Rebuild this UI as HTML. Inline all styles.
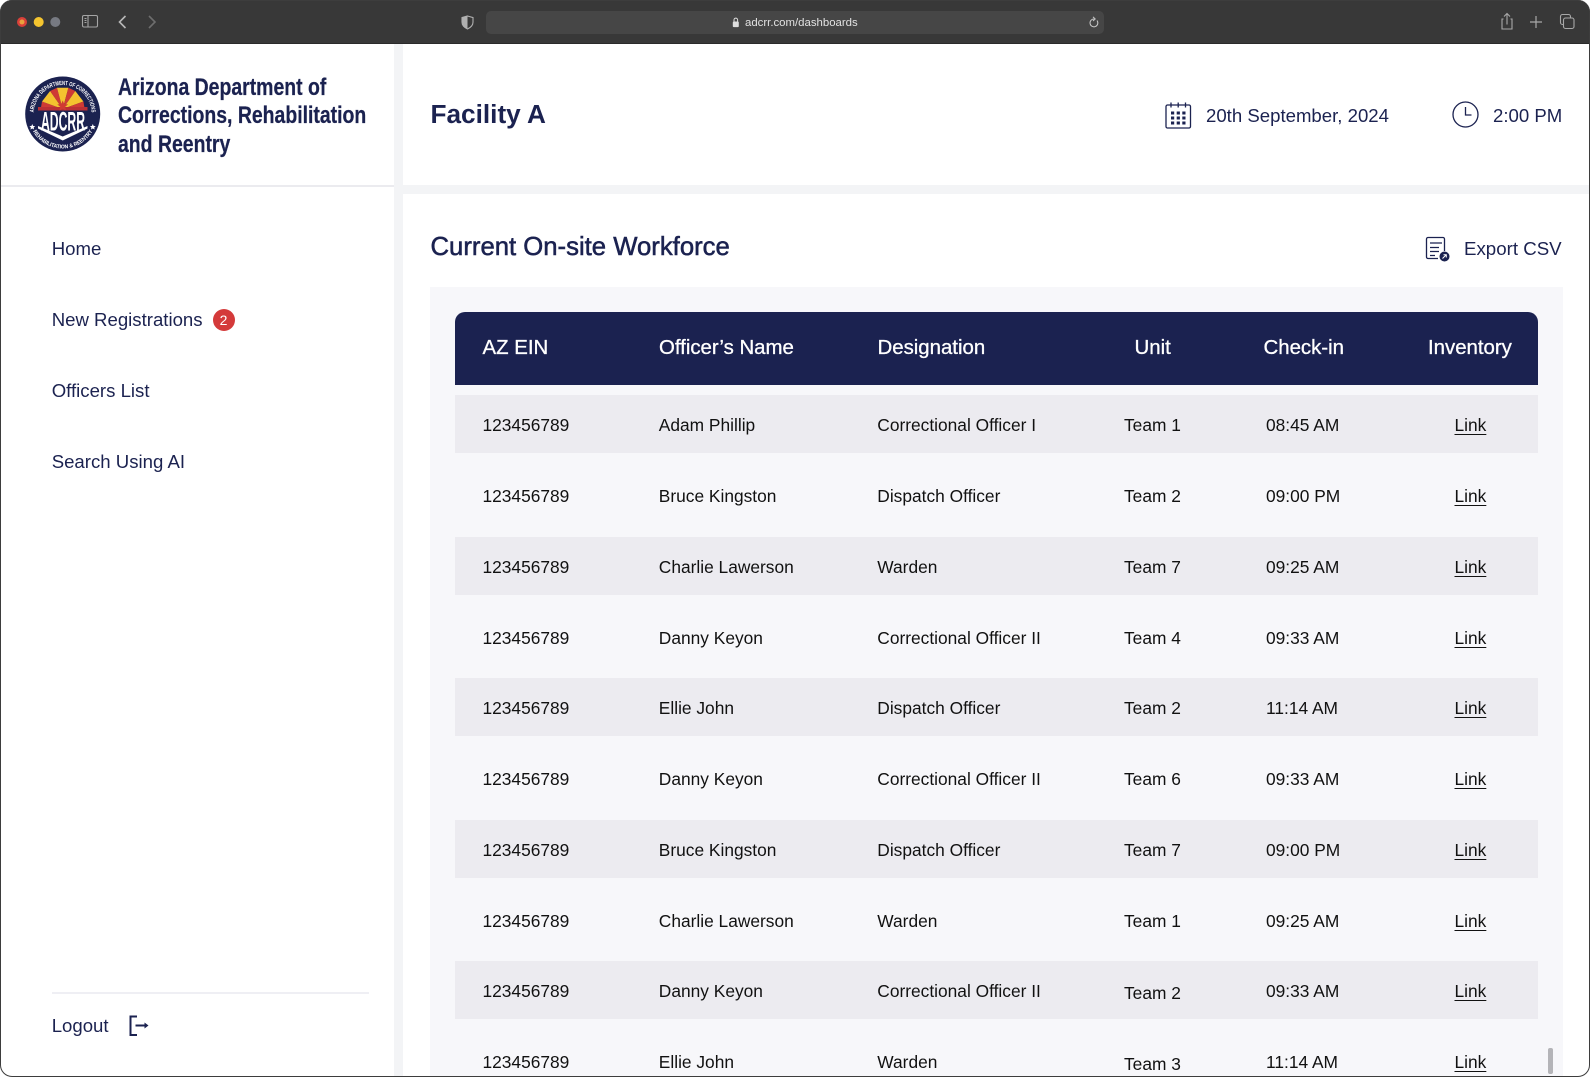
<!DOCTYPE html>
<html><head><meta charset="utf-8"><title>Facility A</title>
<style>
*{box-sizing:border-box;margin:0;padding:0}
html,body{width:1590px;height:1077px;overflow:hidden;background:#fff;font-family:"Liberation Sans",sans-serif}
#win{position:absolute;left:0;top:0;width:1590px;height:1077px;overflow:hidden;background:#f3f4f6;border-radius:12px}
#edge{position:absolute;left:0;top:0;width:1590px;height:1077px;border:1px solid #3d3d3d;border-radius:12px;pointer-events:none;z-index:9}
.a{position:absolute;white-space:nowrap}
.nav{left:51.7px;font-size:18.6px;line-height:24px;color:#1b2250}
.row{position:absolute;left:455px;width:1083px;height:58px}
.row.s{background:#ecebf0}
.row span{position:absolute;top:18px;line-height:24px;font-size:17.35px;color:#111;white-space:nowrap}
.c1{left:27.5px}.c2{left:203.8px}.c3{left:422.3px}.c4{left:669px}.c5{left:811px}
.row .c6{left:999.5px;text-decoration:underline;text-underline-offset:3px}
.th{top:336px;line-height:24px;font-size:20.4px;color:#fff;-webkit-text-stroke:.3px #fff}
</style></head><body>
<div id="win">
<div class="a" style="left:0;top:0;width:1590px;height:44px;background:#383838;border-top:1px solid #6a6a6a;border-bottom:1px solid #2a2a2a"></div>
<svg class="a" style="left:0;top:0" width="1590" height="44" fill="none">
<circle cx="22" cy="22" r="5" fill="#d8403a"/><circle cx="22" cy="22" r="2.5" fill="#e9a23c"/>
<circle cx="38.7" cy="22" r="5" fill="#f5c52f"/><circle cx="55.3" cy="22" r="5" fill="#777a82"/>
<rect x="82.5" y="15.5" width="15" height="11.5" rx="1.5" stroke="#a5a5a5" stroke-width="1.1"/><path d="M88 15.5V27" stroke="#a5a5a5" stroke-width="1.1"/><path d="M84.5 18.5h2M84.5 20.5h2M84.5 22.5h2" stroke="#a5a5a5" stroke-width=".9"/>
<path d="M125.5 16l-6 6 6 6" stroke="#b8b8b8" stroke-width="1.6"/><path d="M149 16l6 6-6 6" stroke="#6e6e6e" stroke-width="1.6"/>
<path d="M467.5 16l5.5 1.6v4.5c0 3.4-2.4 5.4-5.5 6.9-3.1-1.5-5.5-3.5-5.5-6.9v-4.5z" fill="#383838" stroke="#b0b0b0" stroke-width="1.1"/><path d="M467.5 16l-5.5 1.6v4.5c0 3.4 2.4 5.4 5.5 6.9z" fill="#b0b0b0"/>
<rect x="486" y="11" width="618" height="23" rx="5" fill="#464646"/>
<rect x="732.8" y="21.5" width="6" height="5.6" rx="1" fill="#dedede"/><path d="M734 21.5v-1.6a1.8 1.8 0 0 1 3.6 0V21.5" stroke="#dedede" stroke-width="1"/>
<path d="M1097 20.500a3.900 3.900 0 1 1-2.900-1.500" stroke="#c8c8c8" stroke-width="1"/><path d="M1093 16.800l2.200 2.200-2.200 2" stroke="#c8c8c8" stroke-width="1"/>
<path d="M1503.5 19h-1.5v10h10V19h-1.500" stroke="#a8a8a8" stroke-width="1.100"/><path d="M1507 24.500V14M1504 16.500l3-3 3 3" stroke="#a8a8a8" stroke-width="1.100"/>
<path d="M1536 16v12M1530 22h12" stroke="#a8a8a8" stroke-width="1.200"/>
<rect x="1563.500" y="18" width="10.500" height="10.500" rx="2" stroke="#a8a8a8" stroke-width="1.100"/><path d="M1563.500 24.500h-1a2 2 0 0 1-2-2v-6a2 2 0 0 1 2-2h6a2 2 0 0 1 2 2v1.500" stroke="#a8a8a8" stroke-width="1.100"/>
</svg>
<div class="a" style="left:745px;top:16px;font-size:11.4px;line-height:14px;color:#e2e2e2">adcrr.com/dashboards</div>

<div class="a" style="left:0;top:44px;width:394px;height:1033px;background:#fff"></div>
<div class="a" style="left:0;top:185px;width:394px;height:2px;background:#ebebef"></div>
<div class="a" style="left:403px;top:44px;width:1187px;height:141px;background:#fff"></div>
<div class="a" style="left:403px;top:194px;width:1187px;height:883px;background:#fff"></div>

<svg class="a" style="left:25px;top:76px" width="76" height="76" viewBox="0 0 76 76">
<defs><path id="tp1" d="M8.700 38a29 29 0 0 1 58 0"/><path id="tp2" d="M3.200 38a34.500 34.500 0 0 0 69 0"/></defs>
<circle cx="37.700" cy="38" r="37.500" fill="#1b2250"/>
<polygon points="37.700,33 15.700,33 17,25.500" fill="#cf3a35"/>
<polygon points="37.700,33 17,25.500 25.100,15" fill="#f4c22f"/>
<polygon points="37.700,33 25.100,15 32,11.700" fill="#cf3a35"/>
<polygon points="37.700,33 32,11.700 43.400,11.700" fill="#f4c22f"/>
<polygon points="37.700,33 43.400,11.700 50.300,15" fill="#cf3a35"/>
<polygon points="37.700,33 50.300,15 58.400,25.500" fill="#f4c22f"/>
<polygon points="37.700,33 58.400,25.500 59.700,33" fill="#cf3a35"/>
<path d="M13 35H62.500V51L37.700 62 13 51Z" fill="#1b2250"/>
<path d="M13 50L37.700 60.500 62.500 50V52.500L37.700 64.500 13 52.500Z" fill="#fff"/>
<rect x="13" y="31" width="49.500" height="3.500" fill="#b92f35"/>
<path d="M37.700 24.500l1.500 3.600 3.900.300-3 2.500 1 3.800-3.400-2.100-3.400 2.100 1-3.800-3-2.500 3.900-.300z" fill="#d03a32"/>
<text x="38" y="54.500" text-anchor="middle" font-family="Liberation Sans" font-weight="700" font-size="27" fill="#fff" textLength="44" lengthAdjust="spacingAndGlyphs">ADCRR</text>
<text font-family="Liberation Sans" font-weight="700" font-size="6" fill="#fff" textLength="88" lengthAdjust="spacingAndGlyphs"><textPath href="#tp1" startOffset="50%" text-anchor="middle">ARIZONA DEPARTMENT OF CORRECTIONS</textPath></text>
<text font-family="Liberation Sans" font-weight="700" font-size="5.600" fill="#fff" textLength="72" lengthAdjust="spacingAndGlyphs"><textPath href="#tp2" startOffset="50%" text-anchor="middle">REHABILITATION &amp; REENTRY</textPath></text>
<path d="M6.500 49.500l.9 2 2.100.200-1.600 1.400.5 2.100-1.900-1.100-1.900 1.100.5-2.100-1.600-1.400 2.100-.200zM68.900 49.500l.9 2 2.100.200-1.600 1.400.5 2.100-1.900-1.100-1.900 1.100.5-2.100-1.600-1.400 2.100-.200z" fill="#fff" transform="scale(.97) translate(1 0)"/>
</svg>
<div class="a" style="left:118.200px;top:73.500px;font-size:24.500px;line-height:28.500px;font-weight:700;-webkit-text-stroke:.25px #1b2250;color:#1b2250;transform:scaleX(.793);transform-origin:0 0">Arizona Department of<br>Corrections, Rehabilitation<br>and Reentry</div>

<div class="a nav" style="top:236.500px">Home</div>
<div class="a nav" style="top:307.500px">New Registrations</div>
<div class="a" style="left:212.500px;top:309px;width:22px;height:22px;border-radius:50%;background:#d43a3a;color:#fff;font-size:14px;line-height:22px;text-align:center">2</div>
<div class="a nav" style="top:379px">Officers List</div>
<div class="a nav" style="top:450px">Search Using AI</div>
<div class="a" style="left:52px;top:992px;width:317px;height:2px;background:#efeff4"></div>
<div class="a nav" style="top:1014px">Logout</div>
<svg class="a" style="left:128px;top:1014px" width="24" height="24" fill="none" stroke="#1b2250" stroke-width="2"><path d="M9 2.500H2.500v18.500H9"/><path d="M7.500 11.500h11"/><path d="M16.500 8.500l4 3-4 3z" fill="#1b2250" stroke="none"/></svg>

<div class="a" style="left:430.500px;top:97px;font-size:26.200px;line-height:34px;font-weight:700;color:#1b2250">Facility A</div>
<svg class="a" style="left:1165px;top:101px" width="27" height="28" fill="none" stroke="#1b2250" stroke-width="1.300"><rect x="1" y="4" width="24.500" height="23" rx="1.500"/><path d="M6 1.500v5M13.200 1.500v5M20.500 1.500v5"/><g fill="#1b2250" stroke="none"><rect x="6" y="10.500" width="3.200" height="3"/><rect x="11.700" y="10.500" width="3.200" height="3"/><rect x="17.300" y="10.500" width="3.200" height="3"/><rect x="6" y="15.500" width="3.200" height="3"/><rect x="11.700" y="15.500" width="3.200" height="3"/><rect x="17.300" y="15.500" width="3.200" height="3"/><rect x="6" y="20.500" width="3.200" height="3"/><rect x="11.700" y="20.500" width="3.200" height="3"/><rect x="17.300" y="20.500" width="3.200" height="3"/></g></svg>
<div class="a" style="left:1206px;top:103px;font-size:18.600px;line-height:26px;color:#1b2250">20th September, 2024</div>
<svg class="a" style="left:1451px;top:100px" width="29" height="29" fill="none" stroke="#1b2250" stroke-width="1.300"><circle cx="14.500" cy="14.500" r="12.500"/><path d="M14.500 7v8h6"/></svg>
<div class="a" style="left:1493px;top:103px;font-size:18.600px;line-height:26px;color:#1b2250">2:00 PM</div>

<div class="a" style="left:430.500px;top:230.500px;font-size:25.700px;line-height:32px;font-weight:400;-webkit-text-stroke:.55px #1b2250;color:#1b2250">Current On-site Workforce</div>
<svg class="a" style="left:1425px;top:236px" width="26" height="27" fill="none" stroke="#1b2250" stroke-width="1.300"><path d="M19.500 15V3a1.500 1.500 0 0 0-1.500-1.500H3A1.500 1.500 0 0 0 1.500 3v18A1.500 1.500 0 0 0 3 22.500h10"/><path d="M5 7h12M5 11.500h9M5 15.500h9M5 19.500h5"/><circle cx="19.500" cy="20.500" r="5" fill="#1b2250" stroke="none"/><path d="M17.500 22.500l3.500-3.500M18.500 18.800H21.300V21.500" stroke="#fff" stroke-width="1"/></svg>
<div class="a" style="left:1464px;top:237px;font-size:18.700px;line-height:24px;color:#1b2250">Export CSV</div>

<div class="a" style="left:430px;top:287px;width:1133px;height:790px;background:#f7f7fa"></div>
<div class="a" style="left:455px;top:312px;width:1083px;height:73px;background:#1b2250;border-radius:10px 10px 0 0"></div>
<div class="a th" style="left:482.500px">AZ EIN</div>
<div class="a th" style="left:659px">Officer’s Name</div>
<div class="a th" style="left:877.500px">Designation</div>
<div class="a th" style="left:1134.500px">Unit</div>
<div class="a th" style="left:1263.500px">Check-in</div>
<div class="a th" style="left:1428px">Inventory</div>

<div class="row s" style="top:395px"><span class="c1">123456789</span><span class="c2">Adam Phillip</span><span class="c3">Correctional Officer I</span><span class="c4">Team 1</span><span class="c5">08:45 AM</span><span class="c6">Link</span></div>
<div class="row" style="top:466px"><span class="c1">123456789</span><span class="c2">Bruce Kingston</span><span class="c3">Dispatch Officer</span><span class="c4">Team 2</span><span class="c5">09:00 PM</span><span class="c6">Link</span></div>
<div class="row s" style="top:537px"><span class="c1">123456789</span><span class="c2">Charlie Lawerson</span><span class="c3">Warden</span><span class="c4">Team 7</span><span class="c5">09:25 AM</span><span class="c6">Link</span></div>
<div class="row" style="top:607.500px"><span class="c1">123456789</span><span class="c2">Danny Keyon</span><span class="c3">Correctional Officer II</span><span class="c4">Team 4</span><span class="c5">09:33 AM</span><span class="c6">Link</span></div>
<div class="row s" style="top:678px"><span class="c1">123456789</span><span class="c2">Ellie John</span><span class="c3">Dispatch Officer</span><span class="c4">Team 2</span><span class="c5">11:14 AM</span><span class="c6">Link</span></div>
<div class="row" style="top:749px"><span class="c1">123456789</span><span class="c2">Danny Keyon</span><span class="c3">Correctional Officer II</span><span class="c4">Team 6</span><span class="c5">09:33 AM</span><span class="c6">Link</span></div>
<div class="row s" style="top:820px"><span class="c1">123456789</span><span class="c2">Bruce Kingston</span><span class="c3">Dispatch Officer</span><span class="c4">Team 7</span><span class="c5">09:00 PM</span><span class="c6">Link</span></div>
<div class="row" style="top:890.500px"><span class="c1">123456789</span><span class="c2">Charlie Lawerson</span><span class="c3">Warden</span><span class="c4">Team 1</span><span class="c5">09:25 AM</span><span class="c6">Link</span></div>
<div class="row s" style="top:961px"><span class="c1">123456789</span><span class="c2">Danny Keyon</span><span class="c3">Correctional Officer II</span><span class="c4" style="top:20px">Team 2</span><span class="c5">09:33 AM</span><span class="c6">Link</span></div>
<div class="row" style="top:1032px"><span class="c1">123456789</span><span class="c2">Ellie John</span><span class="c3">Warden</span><span class="c4" style="top:20px">Team 3</span><span class="c5">11:14 AM</span><span class="c6">Link</span></div>
<div class="a" style="left:1548px;top:1048px;width:4.500px;height:26px;border-radius:2px;background:#b4b4b8"></div>
</div>
<div id="edge"></div>
</body></html>
